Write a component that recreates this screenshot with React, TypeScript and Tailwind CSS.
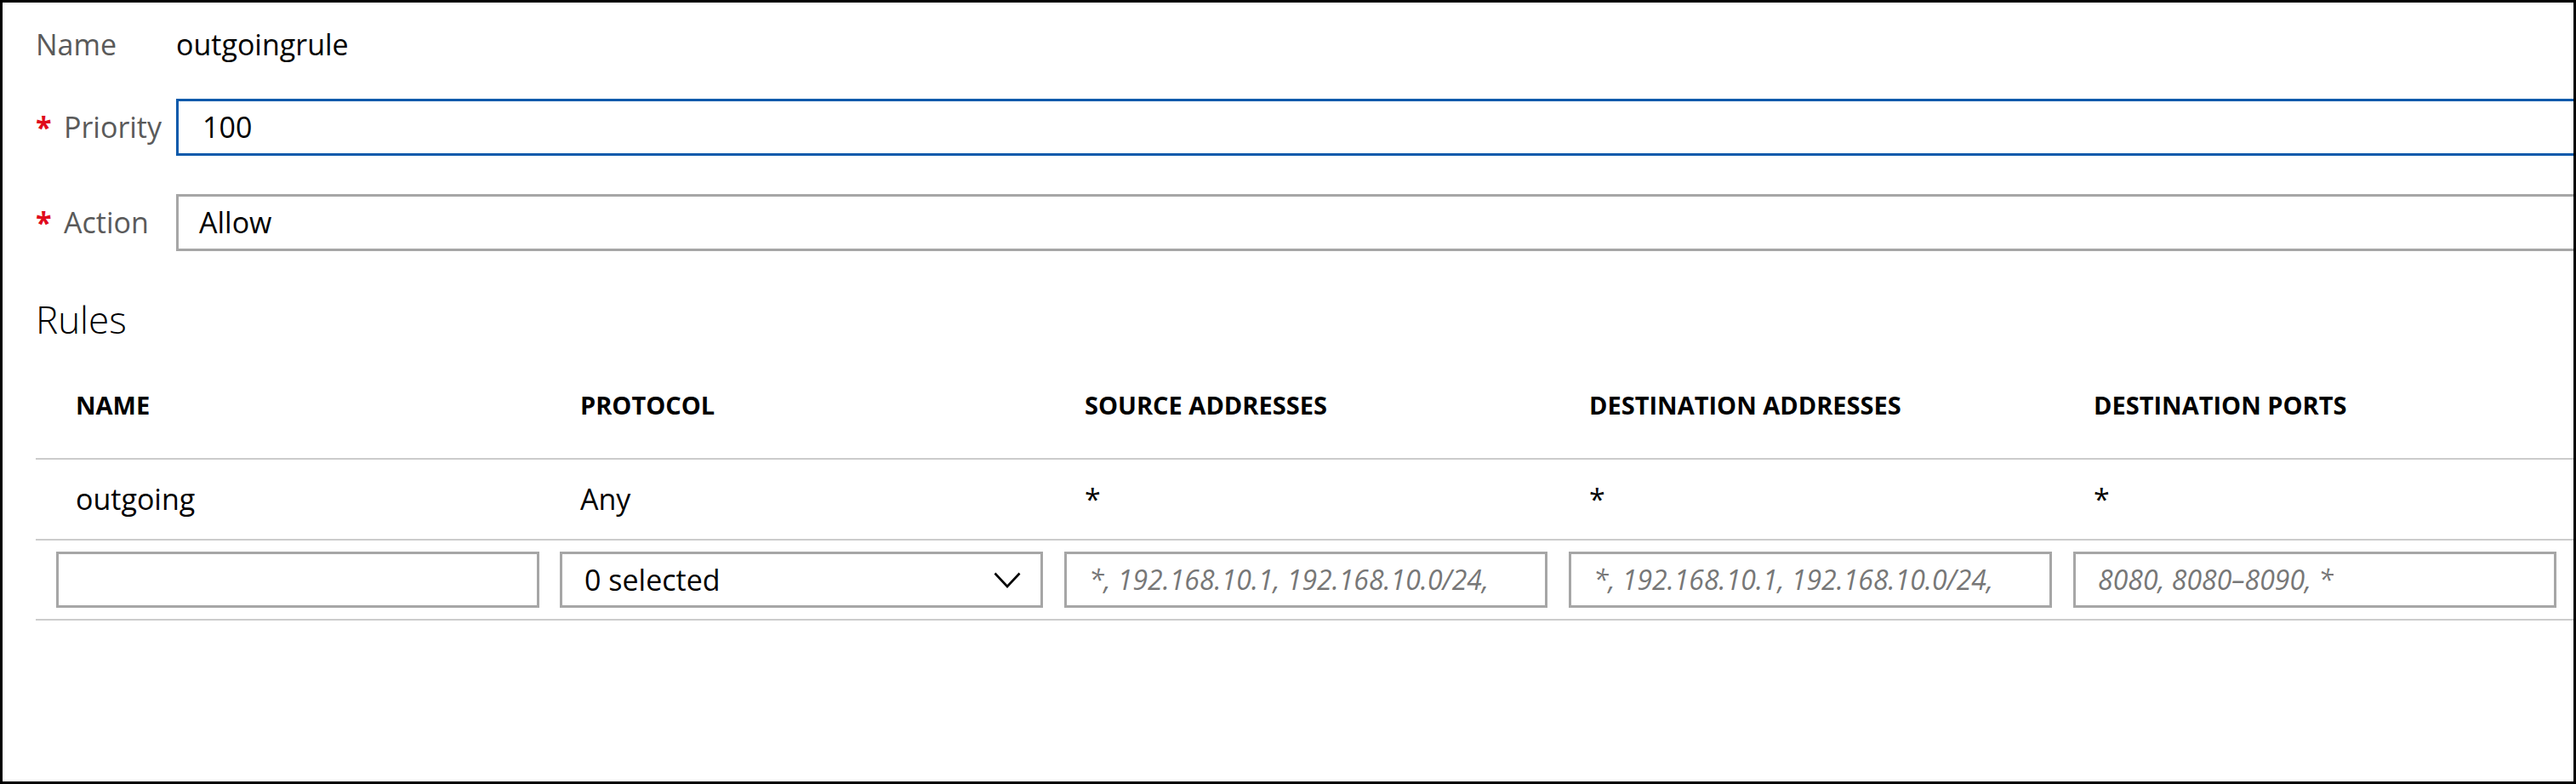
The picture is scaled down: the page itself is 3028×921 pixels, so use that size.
import React from "react";

const columns = [
  "NAME",
  "PROTOCOL",
  "SOURCE ADDRESSES",
  "DESTINATION ADDRESSES",
  "DESTINATION PORTS",
];

const rule = ["outgoing", "Any", "*", "*", "*"];

const Chevron = () => (
  <svg width="32" height="19" viewBox="0 0 32 19" fill="none">
    <polyline
      points="1.5,1.5 16,17 30.5,1.5"
      stroke="#000"
      strokeWidth="2.6"
      strokeLinejoin="miter"
    />
  </svg>
);

const Box = ({
  children,
  className = "",
}: {
  children?: React.ReactNode;
  className?: string;
}) => (
  <div
    className={
      "h-[66px] w-[568px] border-[3px] border-[#a6a6a6] bg-white pl-[26px] pr-[23px] flex items-center " +
      className
    }
  >
    {children}
  </div>
);

const Placeholder = ({ text }: { text: string }) => (
  <span className="text-[32px] italic text-[#777777] whitespace-nowrap overflow-hidden">
    {text}
  </span>
);

export default function App() {
  return (
    <div className="w-[3028px] h-[921px] border-[3px] border-black bg-white overflow-hidden font-['Open_Sans',sans-serif] text-black">
      <div className="pl-[39px] pt-[25px]">
        <div className="flex items-center h-[48px] text-[34px]">
          <div className="w-[165px] text-[#5a5a5a]">Name</div>
          <div>outgoingrule</div>
        </div>

        <div className="flex items-center mt-[40px] text-[34px]">
          <div className="w-[165px] flex items-center text-[#5a5a5a]">
            <span className="w-[33px] font-bold text-[#e00b1c]">*</span>
            <span>Priority</span>
          </div>
          <div className="flex-1 h-[67px] border-[3px] border-r-0 border-[#0b5aab] pl-[28px] flex items-center">
            100
          </div>
        </div>

        <div className="flex items-center mt-[45px] text-[34px]">
          <div className="w-[165px] flex items-center text-[#5a5a5a]">
            <span className="w-[33px] font-bold text-[#e00b1c]">*</span>
            <span>Action</span>
          </div>
          <div className="flex-1 h-[67px] border-[3px] border-r-0 border-[#a6a6a6] pl-[24px] flex items-center">
            Allow
          </div>
        </div>

        <h2 className="mt-[54px] h-[52px] leading-[52px] text-[44px] font-light">
          Rules
        </h2>

        <div className="grid grid-cols-[repeat(5,593px)_1fr] h-[139px] pt-[12px] items-center border-b-2 border-[#cccccc]">
          {columns.map((c) => (
            <div key={c} className="pl-[47px] text-[29px] font-bold whitespace-nowrap">
              {c}
            </div>
          ))}
          <div />
        </div>

        <div className="grid grid-cols-[repeat(5,593px)_1fr] h-[95px] items-center border-b-2 border-[#cccccc] text-[34px]">
          {rule.map((v, i) => (
            <div key={i} className="pl-[47px]">
              {v}
            </div>
          ))}
          <div />
        </div>

        <div className="grid grid-cols-[repeat(5,593px)_1fr] h-[94px] items-center border-b-2 border-[#cccccc]">
          <div className="pl-[24px]">
            <Box />
          </div>
          <div className="pl-[23px]">
            <Box className="justify-between text-[34px]">
              <span>0 selected</span>
              <Chevron />
            </Box>
          </div>
          <div className="pl-[23px]">
            <Box>
              <Placeholder text="*, 192.168.10.1, 192.168.10.0/24," />
            </Box>
          </div>
          <div className="pl-[23px]">
            <Box>
              <Placeholder text="*, 192.168.10.1, 192.168.10.0/24," />
            </Box>
          </div>
          <div className="pl-[23px]">
            <Box>
              <Placeholder text="8080, 8080–8090, *" />
            </Box>
          </div>
          <div />
        </div>
      </div>
    </div>
  );
}
